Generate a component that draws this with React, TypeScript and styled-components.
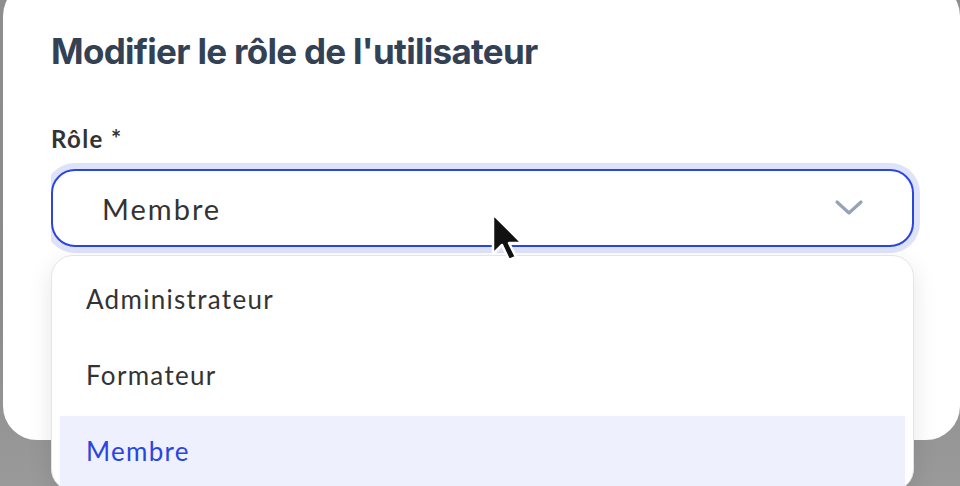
import React from "react";
import styled, { createGlobalStyle } from "styled-components";

const Global = createGlobalStyle`
  html, body { margin: 0; padding: 0; }
  body {
    width: 960px;
    height: 486px;
    overflow: hidden;
    background: linear-gradient(180deg, #8e8e8e 0%, #8a8a8a 60%, #9a9a9a 100%);
    font-family: "Lato", "Noto Sans", sans-serif;
  }
`;

const Stage = styled.div`
  position: relative;
  width: 960px;
  height: 486px;
  overflow: hidden;
`;

const Modal = styled.div`
  margin: -18px 0 0 3px;
  width: 957px;
  height: 458px;
  box-sizing: border-box;
  background: #ffffff;
  border-radius: 34px;
  padding: 47px 46px 0 48px;
  display: flex;
  flex-direction: column;
`;

const Title = styled.h2`
  margin: 0;
  font-family: "Inter", sans-serif;
  font-weight: 700;
  font-size: 35px;
  line-height: 44px;
  letter-spacing: -0.7px;
  color: #334155;
`;

const Field = styled.div`
  margin-top: 51px;
  display: flex;
  flex-direction: column;
  gap: 16px;
`;

const Label = styled.label`
  font-family: "Lato", "Noto Sans", sans-serif;
  font-weight: 700;
  font-size: 24px;
  line-height: 29px;
  letter-spacing: 1.4px;
  color: #333333;
`;

const Select = styled.div`
  height: 78px;
  box-sizing: border-box;
  border: 2px solid #2b45e0;
  border-radius: 24px;
  box-shadow: 0 0 0 6px #dfe3fa;
  clip-path: inset(-8px -8px -8px 0);
  background: #fff;
  display: flex;
  align-items: center;
  justify-content: space-between;
  padding: 0 48px 0 49px;
`;

const SelectValue = styled.span`
  font-size: 29px;
  color: #333333;
  letter-spacing: 2px;
`;

const Panel = styled.div`
  position: absolute;
  left: 51px;
  top: 255px;
  width: 863px;
  height: 236px;
  box-sizing: border-box;
  background: #fff;
  border: 1px solid #e4e5ec;
  border-radius: 22px;
  box-shadow: 0 8px 24px rgba(0, 0, 0, 0.1);
  padding: 8px 8px;
  display: flex;
  flex-direction: column;
`;

const Option = styled.div<{ $active?: boolean }>`
  height: 76px;
  box-sizing: border-box;
  flex: none;
  display: flex;
  align-items: center;
  padding: 0 0 6px 26px;
  font-size: 26px;
  letter-spacing: 1.3px;
  color: ${(p) => (p.$active ? "#2b45e0" : "#333333")};
  background: ${(p) => (p.$active ? "#eef0fd" : "transparent")};
`;

const Cursor = styled.svg`
  position: absolute;
  left: 489px;
  top: 210px;
`;

export default function App() {
  return (
    <>
      <Global />
      <Stage>
        <Modal>
          <Title>Modifier le rôle de l'utilisateur</Title>
          <Field>
            <Label>Rôle *</Label>
            <Select>
              <SelectValue>Membre</SelectValue>
              <svg width="30" height="18" viewBox="0 0 30 18">
                <path d="M3 3 L15 14 L27 3" fill="none" stroke="#94a3b8" strokeWidth="3.2" strokeLinecap="round" strokeLinejoin="round" />
              </svg>
            </Select>
          </Field>
        </Modal>
        <Panel>
          <Option>Administrateur</Option>
          <Option>Formateur</Option>
          <Option $active>Membre</Option>
        </Panel>
        <Cursor width="40" height="52" viewBox="0 0 40 52">
          <path d="M4 4 L4 44 L13 35 L20 50 L27 47 L20 33 L33 33 Z" fill="#111" stroke="#fff" strokeWidth="2.5" strokeLinejoin="round" />
        </Cursor>
      </Stage>
    </>
  );
}
